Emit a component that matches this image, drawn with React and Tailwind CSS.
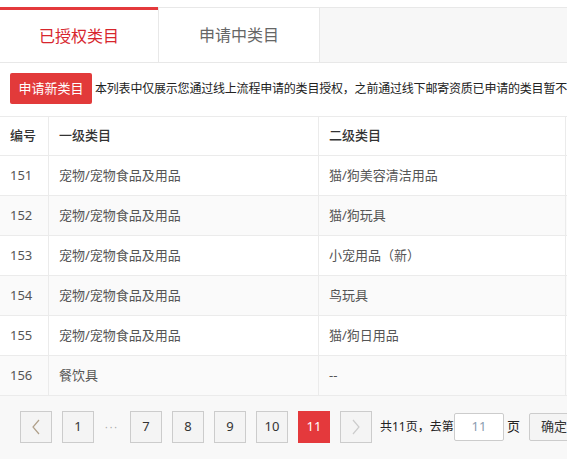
import React from 'react'

const rows = [
  { id: 151, first: '宠物/宠物食品及用品', second: '猫/狗美容清洁用品' },
  { id: 152, first: '宠物/宠物食品及用品', second: '猫/狗玩具' },
  { id: 153, first: '宠物/宠物食品及用品', second: '小宠用品（新）' },
  { id: 154, first: '宠物/宠物食品及用品', second: '鸟玩具' },
  { id: 155, first: '宠物/宠物食品及用品', second: '猫/狗日用品' },
  { id: 156, first: '餐饮具', second: '--' },
]

const Chevron = ({ dir = 'left', color = '#999' }) => (
  <svg width="10" height="16" viewBox="0 0 10 16" fill="none">
    <path
      d={dir === 'left' ? 'M8 1 L2 8 L8 15' : 'M2 1 L8 8 L2 15'}
      stroke={color}
      strokeWidth="1.2"
    />
  </svg>
)

const PageBtn = ({ children, active }) => (
  <div
    className={`w-[32px] h-[32px] flex items-center justify-center text-[13px] border ${
      active ? 'bg-[#e4393c] border-[#e4393c] text-white' : 'bg-[#f4f4f4] border-[#cccccc] text-[#333]'
    }`}
  >
    {children}
  </div>
)

export default function App() {
  return (
    <div
      className="w-[567px] h-[459px] overflow-hidden bg-white flex flex-col"
      style={{ fontFamily: '"Noto Sans", "Noto Sans CJK SC", sans-serif' }}
    >
      {/* Tabs */}
      <div className="mt-[7px] h-[56px] flex border-b border-[#e8e8e8] shrink-0">
        <div className="w-[158px] border-t-[3px] border-[#e4393c] flex items-center justify-center text-[16px] text-[#d7262d]">
          已授权类目
        </div>
        <div className="w-[161px] border-t border-l border-[#e8e8e8] bg-white flex items-center justify-center text-[16px] text-[#666]">
          申请中类目
        </div>
        <div className="flex-1 border-t border-l border-[#e8e8e8] bg-[#f7f7f7]"></div>
      </div>

      {/* Action row */}
      <div className="h-[53px] shrink-0 flex items-start pt-[10px] pl-[10px] whitespace-nowrap overflow-hidden">
        <div className="h-[31px] w-[82px] justify-center bg-[#e23a3a] text-white text-[13px] rounded-[2px] flex items-center shrink-0">
          申请新类目
        </div>
        <div className="ml-[3px] h-[31px] flex items-center text-[12px] text-[#222] tracking-[-0.2px]">
          本列表中仅展示您通过线上流程申请的类目授权，之前通过线下邮寄资质已申请的类目暂不在此展示
        </div>
      </div>

      {/* Table */}
      <div className="border-t border-[#ebebeb] shrink-0">
        <div className="flex h-[39px] border-b border-[#ebebeb] text-[13px] text-[#333] font-medium">
          <div className="w-[49px] border-r border-[#ebebeb] pl-[10px] flex items-center">编号</div>
          <div className="w-[270px] border-r border-[#ebebeb] pl-[10px] flex items-center">一级类目</div>
          <div className="w-[247px] border-r border-[#ebebeb] pl-[10px] flex items-center">二级类目</div>
        </div>
        {rows.map((r, i) => (
          <div
            key={r.id}
            className={`flex h-[40px] border-b border-[#ebebeb] text-[13px] text-[#555] ${
              i % 2 === 1 ? 'bg-[#fafafa]' : 'bg-white'
            }`}
          >
            <div className="w-[49px] border-r border-[#ebebeb] pl-[10px] flex items-center">{r.id}</div>
            <div className="w-[270px] border-r border-[#ebebeb] pl-[10px] flex items-center">{r.first}</div>
            <div className="w-[247px] border-r border-[#ebebeb] pl-[10px] flex items-center">{r.second}</div>
          </div>
        ))}
      </div>

      {/* Pagination */}
      <div className="flex-1 bg-[#f8f8f8] pt-[15px] pl-[20px] flex items-start whitespace-nowrap">
        <div className="flex items-center gap-[10px]">
          <PageBtn>
            <Chevron dir="left" color="#b0a08a" />
          </PageBtn>
          <PageBtn>1</PageBtn>
          <div className="w-[16px] text-center text-[#aaa] text-[10px] tracking-[2px]">···</div>
          <PageBtn>7</PageBtn>
          <PageBtn>8</PageBtn>
          <PageBtn>9</PageBtn>
          <PageBtn>10</PageBtn>
          <PageBtn active>11</PageBtn>
          <PageBtn>
            <Chevron dir="right" color="#cccccc" />
          </PageBtn>
          <div className="flex items-center text-[13px] text-[#222] -ml-[2px]">
            <span className="w-[72px] text-[12px]">共11页，去第</span>
            <div className="ml-[2px] w-[50px] h-[28px] bg-white border border-[#cccccc] rounded-[2px] flex items-center justify-center text-[#8a9bb0]">
              11
            </div>
            <span className="ml-[3px]">页</span>
            <div className="ml-[9px] w-[50px] h-[28px] bg-[#f4f4f4] border border-[#cccccc] rounded-[2px] flex items-center justify-center text-[#333]">
              确定
            </div>
          </div>
        </div>
      </div>
    </div>
  )
}
